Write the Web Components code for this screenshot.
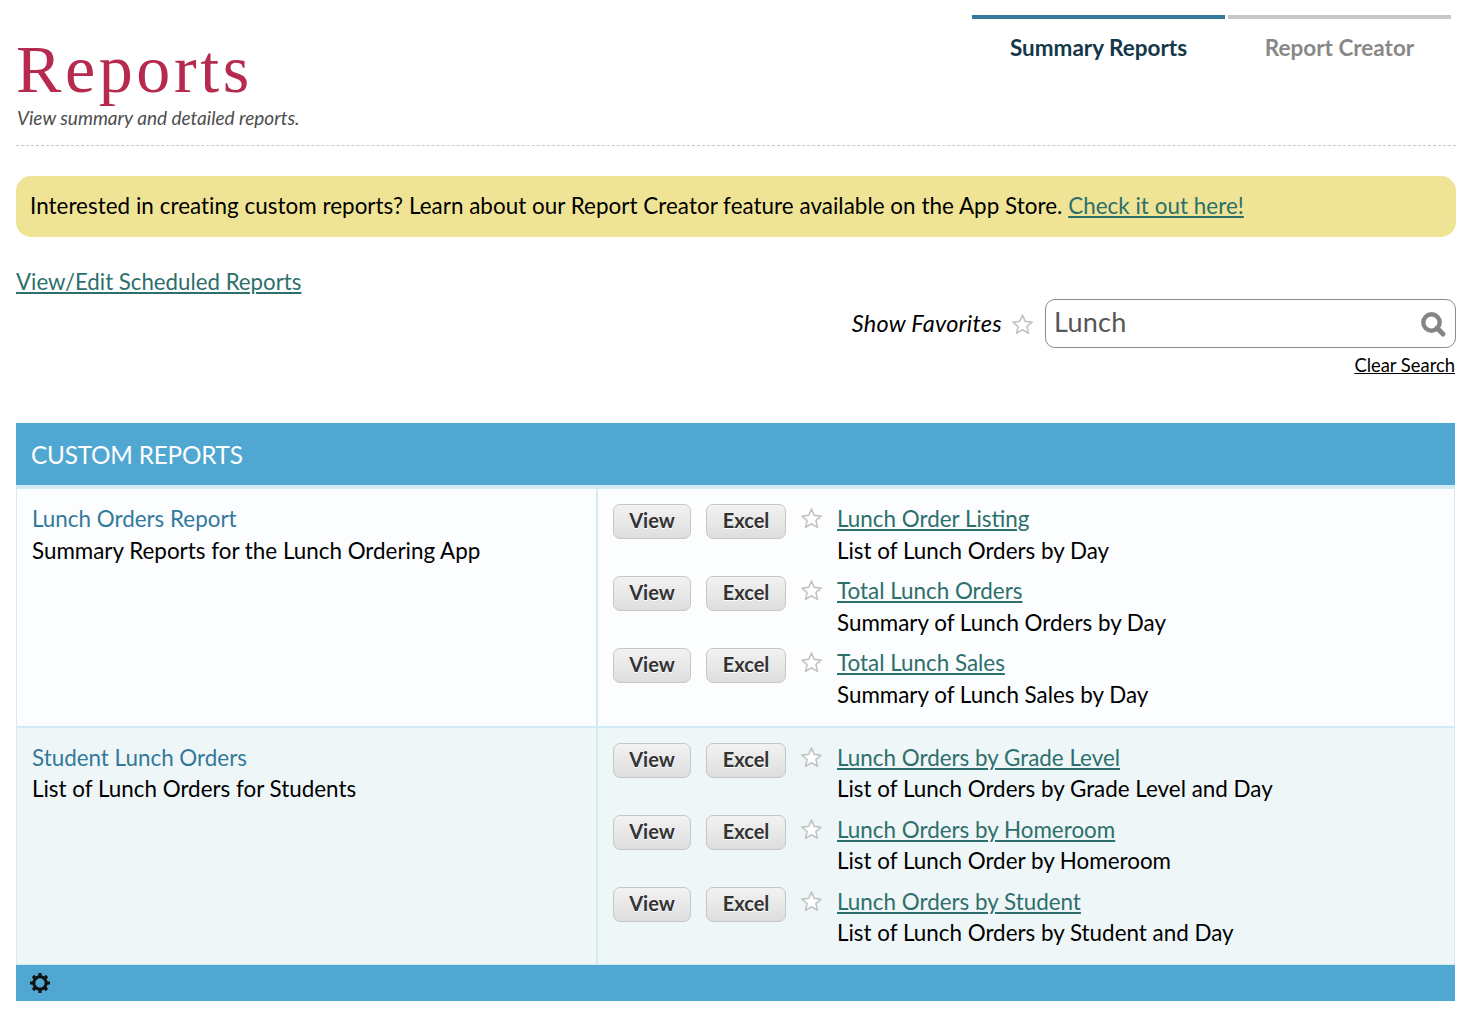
<!DOCTYPE html>
<html>
<head>
<meta charset="utf-8">
<title>Reports</title>
<style>
  html, body { margin: 0; background: #fff; }
  body { font-family: "Lato", "Liberation Sans", sans-serif; color: #000; }
</style>
</head>
<body>
<reports-page>
  <page-header slot="header" heading="Reports" sub="View summary and detailed reports.">
    <tab-item active>Summary Reports</tab-item>
    <tab-item style="width:223px">Report Creator</tab-item>
  </page-header>
  <notice-bar slot="notice" link="Check it out here!">Interested in creating custom reports? Learn about our Report Creator feature available on the App Store.</notice-bar>
  <search-bar slot="search" link="View/Edit Scheduled Reports" value="Lunch"></search-bar>
  <report-table slot="table" heading="CUSTOM REPORTS">
    <report-group name="Lunch Orders Report" desc="Summary Reports for the Lunch Ordering App">
      <report-item name="Lunch Order Listing" desc="List of Lunch Orders by Day"></report-item>
      <report-item name="Total Lunch Orders" desc="Summary of Lunch Orders by Day"></report-item>
      <report-item name="Total Lunch Sales" desc="Summary of Lunch Sales by Day"></report-item>
    </report-group>
    <report-group alt name="Student Lunch Orders" desc="List of Lunch Orders for Students">
      <report-item name="Lunch Orders by Grade Level" desc="List of Lunch Orders by Grade Level and Day"></report-item>
      <report-item name="Lunch Orders by Homeroom" desc="List of Lunch Order by Homeroom"></report-item>
      <report-item name="Lunch Orders by Student" desc="List of Lunch Orders by Student and Day"></report-item>
    </report-group>
  </report-table>
</reports-page>

<script>
const STAR = size => `<svg width="${size}" height="${size}" viewBox="0 0 24 24" aria-hidden="true"><path d="M12 2.2l2.9 6.6 7.1.7-5.4 4.7 1.6 7-6.2-3.7-6.2 3.7 1.6-7L2 9.5l7.1-.7z" fill="#fff" stroke="#c4c4c4" stroke-width="1.7" stroke-linejoin="round"/></svg>`;

class ReportsPage extends HTMLElement {
  connectedCallback() {
    this.attachShadow({ mode: 'open' });
    this.shadowRoot.innerHTML = `
      <style>
        :host { display: block; padding: 0 26px 15px 16px; }
        .wrap { display: flex; flex-direction: column; width: 1440px; }
      </style>
      <div class="wrap">
        <slot name="header"></slot>
        <slot name="notice"></slot>
        <slot name="search"></slot>
        <slot name="table"></slot>
      </div>`;
  }
}

class PageHeader extends HTMLElement {
  connectedCallback() {
    this.attachShadow({ mode: 'open' });
    this.shadowRoot.innerHTML = `
      <style>
        :host { display: flex; justify-content: space-between; height: 145px; border-bottom: 1px dashed #c8c8c8; }
        h1 { margin: 0; padding-top: 32px; height: 74px; font: 400 68px/74px "Liberation Serif", serif; color: #b72a4f; letter-spacing: 3.6px; white-space: nowrap; }
        p { margin: 0 0 0 1px; font: italic 400 19px/20px "Lato", sans-serif; color: #4d4d4d; padding-top: 2px; }
        .tabs { display: flex; gap: 3px; padding-top: 15px; margin-right: 5px; }
      </style>
      <div>
        <h1>${this.getAttribute('heading')}</h1>
        <p>${this.getAttribute('sub')}</p>
      </div>
      <div class="tabs"><slot></slot></div>`;
  }
}

class TabItem extends HTMLElement {
  connectedCallback() {
    this.attachShadow({ mode: 'open' });
    this.shadowRoot.innerHTML = `
      <style>
        :host { display: block; width: 253px; height: 60px; box-sizing: border-box; border-top: 4px solid #c8c8c8; color: #888;
          text-align: center; font: 700 22.5px/58px "Lato", sans-serif; }
        :host([active]) { border-top-color: #33799b; color: #14384a; }
      </style>
      <slot></slot>`;
  }
}

class NoticeBar extends HTMLElement {
  connectedCallback() {
    this.attachShadow({ mode: 'open' });
    this.shadowRoot.innerHTML = `
      <style>
        :host { display: block; margin-top: 30px; height: 61px; box-sizing: border-box; padding: 0 14px; background: #efe496; border-radius: 15px;
          font: 400 22.4px/60px "Lato", sans-serif; letter-spacing: .04px; white-space: nowrap; }
        a { color: #2d6f6b; text-decoration: underline; }
      </style>
      <slot></slot> <a href="#">${this.getAttribute('link')}</a>`;
  }
}

class SearchBar extends HTMLElement {
  connectedCallback() {
    this.attachShadow({ mode: 'open' });
    this.shadowRoot.innerHTML = `
      <style>
        :host { display: block; height: 186px; font-family: "Lato", sans-serif; }
        .sched { display: block; padding-top: 30px; height: 31px; font-size: 22.25px; line-height: 30px; color: #2d6f6b; }
        .row { display: flex; justify-content: flex-end; align-items: center; height: 50px; }
        .fav { font-style: italic; font-size: 23.5px; letter-spacing: .25px; margin-right: 9px; }
        .row svg { margin-right: 11px; margin-top: 2px; display: block; }
        .box { width: 411px; height: 49px; box-sizing: border-box; border: 1px solid #8a8a8a; border-radius: 10px; display: flex; align-items: center; justify-content: space-between; padding: 0 8px 0 8px; }
        .box span { font-size: 27px; color: #555; margin-top: -3px; letter-spacing: .3px; }
        .box svg { margin: 2px 0 0; }
        .clear { text-align: right; font-size: 18.4px; line-height: 24px; margin-top: 5px; padding-right: 1px; }
        .clear a { color: #000; }
      </style>
      <a class="sched" href="#">${this.getAttribute('link')}</a>
      <div class="row">
        <span class="fav">Show Favorites</span>${STAR(23)}
        <div class="box">
          <span>${this.getAttribute('value')}</span>
          <svg width="28" height="28" viewBox="0 0 28 28" aria-hidden="true"><circle cx="12.5" cy="12.5" r="8.2" fill="none" stroke="#858585" stroke-width="4.4"/><path d="M18 18l6 6" stroke="#858585" stroke-width="5" stroke-linecap="round"/></svg>
        </div>
      </div>
      <div class="clear"><a href="#">Clear Search</a></div>`;
  }
}

class ReportTable extends HTMLElement {
  connectedCallback() {
    this.attachShadow({ mode: 'open' });
    this.shadowRoot.innerHTML = `
      <style>
        :host { display: block; width: 1439px; }
        .head { height: 62px; background: #4fa7d2; color: #fff; padding: 0 15px; font: 400 24.3px/63px "Lato", sans-serif; letter-spacing: -.2px; }
        .body { display: flex; flex-direction: column; border-top: 4px solid #d2ebf4; }
        .foot { height: 36px; background: #4fa7d2; display: flex; align-items: center; padding-left: 14px; }
      </style>
      <div class="head">${this.getAttribute('heading')}</div>
      <div class="body"><slot></slot></div>
      <div class="foot">
        <svg width="20" height="20" viewBox="0 0 20 20" aria-hidden="true"><circle cx="10" cy="10" r="6.2" fill="none" stroke="#111" stroke-width="3"/><g stroke="#111" stroke-width="3.2"><path d="M10 0v4M10 16v4M0 10h4M16 10h4M3 3l2.8 2.8M14.2 14.2L17 17M17 3l-2.8 2.8M5.8 14.2L3 17"/></g></svg>
      </div>`;
  }
}

class ReportGroup extends HTMLElement {
  connectedCallback() {
    this.attachShadow({ mode: 'open' });
    this.shadowRoot.innerHTML = `
      <style>
        :host { display: flex; height: 239px; box-sizing: border-box; background: #fbfdff; border-left: 1px solid #d2ebf4; border-right: 1px solid #d2ebf4; border-bottom: 2px solid #d2ebf4; font: 400 22.4px/32px "Lato", sans-serif; }
        :host([alt]) { height: 237px; background: #eff6f8; border-bottom-width: 1px; --name-h: 31px; }
        .info { width: 581px; box-sizing: border-box; padding: 14px 15px 0; border-right: 2px solid #d2ebf4; flex: none; }
        .name { color: #33799b; height: var(--name-h, 32px); }
        .items { flex: 1; padding: 15px 15px 0; display: flex; flex-direction: column; }
      </style>
      <div class="info">
        <div class="name">${this.getAttribute('name')}</div>
        <div>${this.getAttribute('desc')}</div>
      </div>
      <div class="items"><slot></slot></div>`;
  }
}

class ReportItem extends HTMLElement {
  connectedCallback() {
    this.attachShadow({ mode: 'open' });
    this.shadowRoot.innerHTML = `
      <style>
        :host { display: flex; height: 72px; font: 400 22.4px/32px "Lato", sans-serif; }
        .btn { box-sizing: border-box; height: 35px; border: 1px solid #c6c6c6; border-radius: 7px; background: linear-gradient(#f2f2f2, #dedede);
          color: #333; font: 700 20px/30px "Lato", sans-serif; text-align: center; text-shadow: 0 1px 0 #fff; }
        .view { width: 78px; margin-right: 15px; }
        .excel { width: 80px; margin-right: 14px; }
        svg { display: block; margin: 3px 3px 0 0; flex: none; }
        .text { margin-left: 11px; margin-top: -1px; }
        a { color: #2d6f6b; display: block; height: var(--name-h, 32px); }
      </style>
      <div class="btn view">View</div>
      <div class="btn excel">Excel</div>
      ${STAR(23)}
      <div class="text">
        <a href="#">${this.getAttribute('name')}</a>
        <div>${this.getAttribute('desc')}</div>
      </div>`;
  }
}

customElements.define('reports-page', ReportsPage);
customElements.define('page-header', PageHeader);
customElements.define('tab-item', TabItem);
customElements.define('notice-bar', NoticeBar);
customElements.define('search-bar', SearchBar);
customElements.define('report-table', ReportTable);
customElements.define('report-group', ReportGroup);
customElements.define('report-item', ReportItem);
</script>
</body>
</html>
